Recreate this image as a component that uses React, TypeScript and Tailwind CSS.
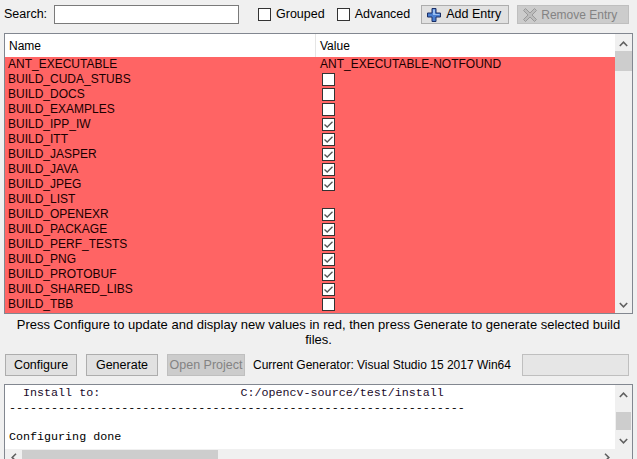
import React from "react";

const rows: { name: string; value: string | boolean }[] = [
  { name: "ANT_EXECUTABLE", value: "ANT_EXECUTABLE-NOTFOUND" },
  { name: "BUILD_CUDA_STUBS", value: false },
  { name: "BUILD_DOCS", value: false },
  { name: "BUILD_EXAMPLES", value: false },
  { name: "BUILD_IPP_IW", value: true },
  { name: "BUILD_ITT", value: true },
  { name: "BUILD_JASPER", value: true },
  { name: "BUILD_JAVA", value: true },
  { name: "BUILD_JPEG", value: true },
  { name: "BUILD_LIST", value: "" },
  { name: "BUILD_OPENEXR", value: true },
  { name: "BUILD_PACKAGE", value: true },
  { name: "BUILD_PERF_TESTS", value: true },
  { name: "BUILD_PNG", value: true },
  { name: "BUILD_PROTOBUF", value: true },
  { name: "BUILD_SHARED_LIBS", value: true },
  { name: "BUILD_TBB", value: false },
];

const Check = ({ checked }: { checked: boolean }) => (
  <span className="w-[13px] h-[13px] border border-[#333333] bg-white flex items-center justify-center">
    {checked && (
      <svg width="9" height="7" viewBox="0 0 9 7">
        <path d="M0.5 3.5 L3.2 6 L8.5 0.8" fill="none" stroke="#555" strokeWidth="1.3" />
      </svg>
    )}
  </span>
);

const Chevron = ({ up }: { up?: boolean }) => (
  <svg width="9" height="6" viewBox="0 0 9 6">
    <path d={up ? "M0.8 5 L4.5 1.2 L8.2 5" : "M0.8 1 L4.5 4.8 L8.2 1"} fill="none" stroke="#606060" strokeWidth="1.6" />
  </svg>
);

const Side = ({ up }: { up?: boolean }) => (
  <svg width="6" height="9" viewBox="0 0 6 9">
    <path d={up ? "M5 0.8 L1.2 4.5 L5 8.2" : "M1 0.8 L4.8 4.5 L1 8.2"} fill="none" stroke="#606060" strokeWidth="1.6" />
  </svg>
);

const Btn = ({ children, disabled }: { children: React.ReactNode; disabled?: boolean }) => (
  <button
    className={
      disabled
        ? "h-[22px] w-full whitespace-nowrap border border-[#bfbfbf] bg-[#cccccc] text-[#838383]"
        : "h-[22px] w-full whitespace-nowrap border border-[#adadad] bg-[#e1e1e1] text-black"
    }
  >
    {children}
  </button>
);

export default function App() {
  return (
    <div className="w-[637px] h-[459px] overflow-hidden bg-[#f0f0f0] text-[12px] text-black font-['Liberation_Sans',sans-serif] flex flex-col">
      {/* Top bar */}
      <div className="flex items-center h-[19px] mt-[5px] pl-[4px] shrink-0">
        <span className="w-[50px] text-[12.5px]">Search:</span>
        <div className="w-[185px] h-[19px] border border-[#7a7a7a] bg-white" />
        <span className="ml-[19px] w-[13px] h-[13px] border border-[#333] bg-white" />
        <span className="ml-[5px] text-[12.5px]">Grouped</span>
        <span className="ml-[12px] w-[13px] h-[13px] border border-[#333] bg-white" />
        <span className="ml-[5px] text-[12.5px]">Advanced</span>
        <button className="ml-[11px] w-[88px] h-[19px] border border-[#adadad] bg-[#e1e1e1] flex items-center pl-[5px] gap-[5px] text-[12.5px]">
          <svg width="14" height="14" viewBox="0 0 14 14">
            <path d="M5 0.5 H9 V5 H13.5 V9 H9 V13.5 H5 V9 H0.5 V5 H5 Z" fill="#4a7fd0" stroke="#1a2f66" strokeWidth="1" />
            <path d="M6 1.5 H8 V6 H12.5 V7 H6 Z" fill="#9cc0f0" />
          </svg>
          <span>Add Entry</span>
        </button>
        <button className="ml-[8px] w-[112px] h-[19px] border border-[#bfbfbf] bg-[#cccccc] text-[#838383] flex items-center pl-[5px] gap-[4px] text-[12px] whitespace-nowrap">
          <svg width="14" height="14" viewBox="0 0 14 14">
            <path d="M2.5 0.5 L7 5 L11.5 0.5 L13.5 2.5 L9 7 L13.5 11.5 L11.5 13.5 L7 9 L2.5 13.5 L0.5 11.5 L5 7 L0.5 2.5 Z" fill="#bcbcbc" stroke="#9a9a9a" strokeWidth="1" />
          </svg>
          <span>Remove Entry</span>
        </button>
      </div>

      {/* Cache table */}
      <div className="mt-[9px] mx-[4px] h-[281px] border border-[#828790] flex shrink-0">
        <div className="flex-1 flex flex-col">
          <div className="h-[23px] bg-white flex items-center">
            <div className="w-[311px] h-full pl-[4px] flex items-center border-r border-[#e5e5e5]">Name</div>
            <div className="pl-[4px]">Value</div>
          </div>
          <div className="bg-[#ff6464] flex-1 text-[#1a0000]">
            {rows.map((r) => (
              <div key={r.name} className="h-[15px] flex items-center leading-[13px]">
                <div className="w-[311px] pl-[3px]">{r.name}</div>
                <div className="pl-[4px] flex items-center">
                  {typeof r.value === "boolean" ? (
                    <span className="ml-[2px]">
                      <Check checked={r.value} />
                    </span>
                  ) : (
                    r.value
                  )}
                </div>
              </div>
            ))}
          </div>
        </div>
        <div className="w-[17px] bg-[#f0f0f0] flex flex-col items-center">
          <div className="h-[17px] flex items-center pt-[2px]">
            <Chevron up />
          </div>
          <div className="w-[17px] h-[20px] bg-[#cdcdcd]" />
          <div className="flex-1" />
          <div className="h-[17px] flex items-center">
            <Chevron />
          </div>
        </div>
      </div>

      {/* Hint */}
      <div className="mt-[3px] px-[10px] text-center text-[13px] leading-[15px] shrink-0">
        Press Configure to update and display new values in red, then press Generate to generate selected build
        <br />
        files.
      </div>

      {/* Buttons */}
      <div className="mt-[7px] flex items-center pl-[5px] h-[22px] shrink-0 text-[12.5px]">
        <div className="w-[72px] flex">
          <Btn>Configure</Btn>
        </div>
        <div className="ml-[9px] w-[72px] flex">
          <Btn>Generate</Btn>
        </div>
        <div className="ml-[9px] w-[78px] flex">
          <Btn disabled>Open Project</Btn>
        </div>
        <span className="ml-[8px] whitespace-nowrap text-[12px]">Current Generator: Visual Studio 15 2017 Win64</span>
        <div className="ml-auto mr-[8px] w-[107px] h-[22px] border border-[#bfbfbf] bg-[#e6e6e6]" />
      </div>

      {/* Output */}
      <div className="mt-[8px] mx-[4px] h-[83px] shrink-0 border border-[#828790] bg-white flex flex-col">
        <div className="flex flex-1 min-h-0">
          <pre className="flex-1 pl-[4px] pt-[1px] font-['Liberation_Mono',monospace] text-[11.7px] leading-[14.5px] text-black overflow-hidden">
            <div className="text-[#1a0a2a]">{"  Install to:                    C:/opencv-source/test/install"}</div>
            <div>{"-----------------------------------------------------------------"}</div>
            <div>{" "}</div>
            <div>Configuring done</div>
          </pre>
          <div className="w-[17px] bg-[#f0f0f0] flex flex-col items-center">
            <div className="h-[17px] flex items-center pt-[2px]">
              <Chevron up />
            </div>
            <div className="mt-[10px] w-[15px] h-[18px] bg-[#cdcdcd]" />
            <div className="flex-1" />
            <div className="h-[17px] flex items-center">
              <Chevron />
            </div>
          </div>
        </div>
        <div className="h-[17px] bg-[#f0f0f0] flex items-center shrink-0">
          <div className="w-[17px] flex justify-center">
            <Side up />
          </div>
          <div className="w-[196px] h-[15px] bg-[#cdcdcd]" />
          <div className="flex-1" />
          <div className="w-[17px] flex justify-center mr-[17px]">
            <Side />
          </div>
        </div>
      </div>
    </div>
  );
}
